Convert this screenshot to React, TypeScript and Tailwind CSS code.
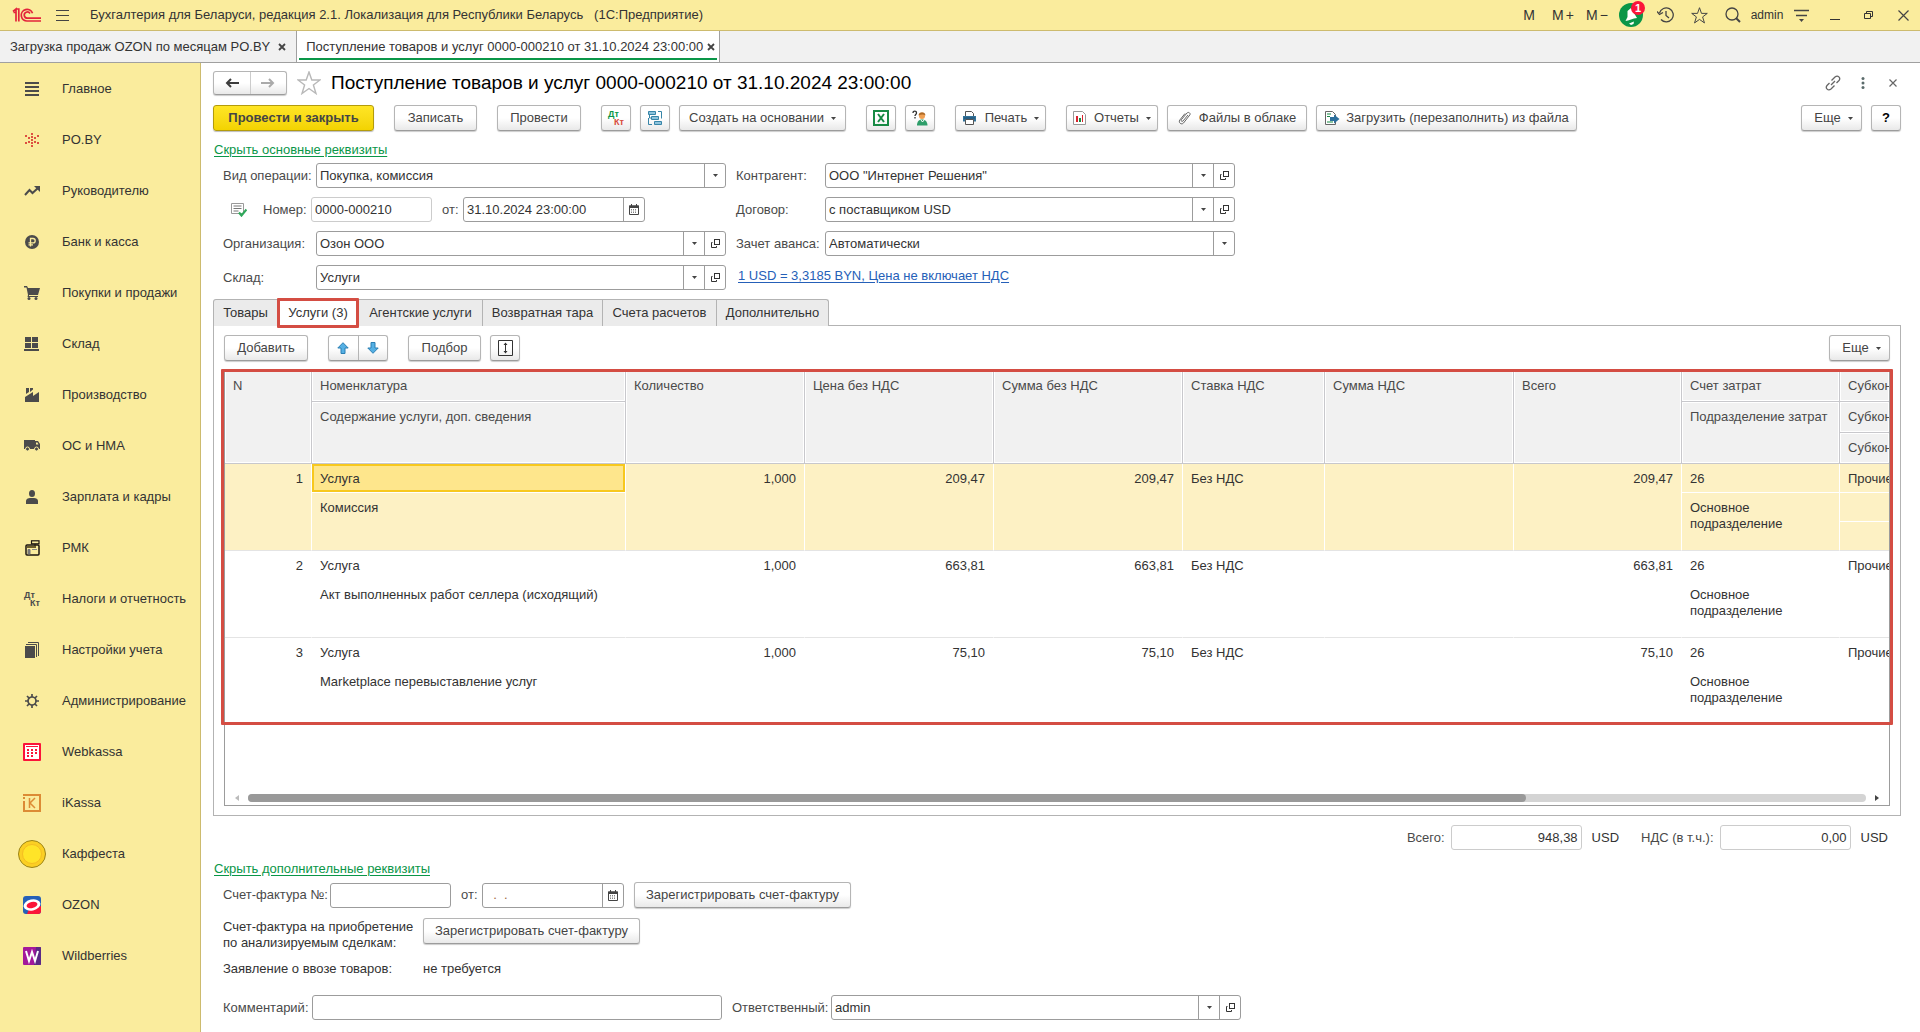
import type { ReactNode } from 'react';
import clsx from 'clsx';

/* ---------- Small icons ---------- */

function Caret({ className = '' }: { className?: string }) {
  return (
    <svg width="5" height="3" viewBox="0 0 5 3" className={className} aria-hidden="true">
      <path d="M0 0h5L2.500 3z" fill="#444" />
    </svg>
  );
}

function OpenIcon() {
  return (
    <svg width="11" height="11" viewBox="0 0 11 11" fill="none" stroke="#333" aria-hidden="true">
      <rect x="4.500" y="1.500" width="5" height="5" />
      <path d="M2.500 4.500H1.500v5h5V8" />
    </svg>
  );
}

function CalendarIcon() {
  return (
    <svg width="10" height="11" viewBox="0 0 10 11" aria-hidden="true">
      <path d="M.5 2h9v8.500h-9z" fill="none" stroke="#444" />
      <path d="M0 1.500h10V4H0zM2 0h1v2H2zM7 0h1v2H7z" fill="#444" />
      <path d="M2 5.500h6M2 7h6M2 8.500h6" stroke="#777" strokeWidth=".9" strokeDasharray="1 1" />
    </svg>
  );
}

function DtKtIcon({ dt = '#0a9648', kt = '#d84a3a' }: { dt?: string; kt?: string }) {
  return (
    <svg width="18" height="18" viewBox="0 0 18 18" aria-hidden="true" fontFamily="Liberation Sans, Arial, sans-serif" fontWeight="700" fontSize="9">
      <text x="1" y="8" fill={dt}>Дт</text>
      <text x="7" y="16" fill={kt}>Кт</text>
    </svg>
  );
}

function StarOutline({ size, color }: { size: number; color: string }) {
  return (
    <svg width={size} height={size} viewBox="0 0 24 24" fill="none" stroke={color} strokeWidth="1.400" aria-hidden="true">
      <path d="M12 1l2.800 8H23l-6.600 5 2.600 8.500-7-5-7 5L7.600 14 1 9h8.200z" />
    </svg>
  );
}

function Logo() {
  return (
    <svg width="30" height="16" viewBox="0 0 30 16" fill="none" stroke="#e3243b" strokeWidth="1.700" aria-label="1C">
      <path d="M1 4.500L4 2v12.500M4 2h2.800v12.500M1.500 5.500H4" />
      <path d="M20.500 6.200A5.800 5.800 0 1 0 15.500 14H29" />
      <path d="M18 6.500A3.100 3.100 0 1 0 15.500 11.200H29" />
    </svg>
  );
}

/* ---------- Title bar ---------- */

function BellIcon() {
  return (
    <span className="relative block h-6 w-6">
      <svg width="24" height="24" viewBox="0 0 24 24" aria-hidden="true">
        <circle cx="12" cy="12" r="12" fill="#0a9648" />
        <path d="M6.500 18l2-4V8l3.500-3 6 10-3 .5-6 2z" fill="#fff" />
        <path d="M10 20.500l5-2-.5 2.500-2.500 1z" fill="#fff" />
      </svg>
      <span className="absolute -top-0.5 -right-0.5 flex h-[14px] w-[14px] items-center justify-center rounded-full bg-[#fb1439] text-[11px] leading-none font-bold text-white">
        1
      </span>
    </span>
  );
}

const titleActions: { label: string; icon: ReactNode }[] = [
  { label: 'Память', icon: 'M' },
  { label: 'Память плюс', icon: <span className="flex gap-[2px]">M<span>+</span></span> },
  { label: 'Память минус', icon: <span className="flex gap-[2px]">M<span>−</span></span> },
  { label: 'Оповещения', icon: <BellIcon /> },
  {
    label: 'История',
    icon: (
      <svg width="17" height="16" viewBox="0 0 17 16" fill="none" stroke="#444" strokeWidth="1.300">
        <path d="M2.500 6A7 7 0 1 1 4 12.500M9 4v4.500l3 2.500" />
        <path d="M0 4.500l2.500 3L6 5.500" />
      </svg>
    ),
  },
  { label: 'Избранное', icon: <StarOutline size={17} color="#444" /> },
  {
    label: 'Поиск',
    icon: (
      <svg width="16" height="16" viewBox="0 0 16 16" fill="none" stroke="#444">
        <circle cx="7" cy="7" r="6" strokeWidth="1.300" />
        <path d="M11 11l4 4" strokeWidth="2" />
      </svg>
    ),
  },
  { label: 'Пользователь', icon: <span className="text-xs">admin</span> },
  {
    label: 'Настройки',
    icon: (
      <svg width="15" height="13" viewBox="0 0 15 13" stroke="#444" strokeWidth="1.300">
        <path d="M0 1.500h15M2 6.500h11" />
        <path d="M5 10h5l-2.500 3z" fill="#444" stroke="none" />
      </svg>
    ),
  },
  {
    label: 'Свернуть',
    icon: (
      <svg width="10" height="10" viewBox="0 0 10 10" stroke="#333">
        <path d="M0 9.500h10" />
      </svg>
    ),
  },
  {
    label: 'Восстановить',
    icon: (
      <svg width="10" height="10" viewBox="0 0 10 10" fill="none" stroke="#333">
        <path d="M.5 3.500h6v5h-6zM2.500 3V1.500h6v5H7" />
      </svg>
    ),
  },
  {
    label: 'Закрыть',
    icon: (
      <svg width="11" height="11" viewBox="0 0 11 11" stroke="#444" strokeWidth="1.200">
        <path d="M.5.5l10 10M10.500.5l-10 10" />
      </svg>
    ),
  },
];

function TitleBar() {
  return (
    <header className="flex h-[31px] items-center border-b border-[#cdbb6e] bg-[#faec9d]">
      <div className="flex w-[90px] items-center gap-[13px] pl-3">
        <Logo />
        <button aria-label="Меню">
          <svg width="15" height="11" viewBox="0 0 15 11" stroke="#444" className="block">
            <path d="M1 .5h13M1 5.500h13M1 10.500h13" />
          </svg>
        </button>
      </div>
      <h1 className="flex-1 text-[13px] whitespace-pre">
        {'Бухгалтерия для Беларуси, редакция 2.1. Локализация для Республики Беларусь   (1С:Предприятие)'}
      </h1>
      <div className="flex">
        {titleActions.map((a) => (
          <button
            key={a.label}
            aria-label={a.label}
            className="flex h-[30px] w-[34px] items-center justify-center text-[14px]"
          >
            {a.icon}
          </button>
        ))}
      </div>
    </header>
  );
}

function WindowTabs() {
  return (
    <nav className="flex h-8 border-b border-[#a0a0a0] bg-[#f1f1f1] text-[13px]">
      <div className="flex items-center gap-2 border-r border-[#a0a0a0] px-[10px]">
        <a href="#ozon" className="whitespace-nowrap">Загрузка продаж OZON по месяцам PO.BY</a>
        <CloseTab />
      </div>
      <div className="flex bg-white px-[2px] pb-[2px]">
        <div className="flex items-center gap-1 pt-[2px] pr-[2px] pl-[7px] shadow-[inset_0_-2px_#0a9648]">
          <a href="#receipt" className="whitespace-nowrap">Поступление товаров и услуг 0000-000210 от 31.10.2024 23:00:00</a>
          <CloseTab />
        </div>
      </div>
      <div className="border-l border-[#a0a0a0]" />
    </nav>
  );
}

function CloseTab() {
  return (
    <button aria-label="Закрыть вкладку">
      <svg width="8" height="8" viewBox="0 0 8 8" stroke="#444" strokeWidth="1.800">
        <path d="M1 1l6 6M7 1L1 7" />
      </svg>
    </button>
  );
}

/* ---------- Sidebar ---------- */

const g = '#4b4b4b';

const sections: { name: string; icon: ReactNode }[] = [
  {
    name: 'Главное',
    icon: (
      <svg width="14" height="14" viewBox="0 0 14 14" stroke={g} strokeWidth="2">
        <path d="M0 1h14M0 5h14M0 9h14M0 13h14" />
      </svg>
    ),
  },
  {
    name: 'PO.BY',
    icon: (
      <svg width="14" height="14" viewBox="0 0 14 14" fill="#dd5040">
        <path d="M6 0h2v2H6zM6 3h2v2H6zM6 6h2v2H6zM6 9h2v2H6zM6 12h2v2H6zM0 2h2v2H0zM12 2h2v2h-2zM3 4h2v2H3zM9 4h2v2H9zM3 8h2v2H3zM9 8h2v2H9zM0 9h2v2H0zM12 9h2v2h-2z" />
      </svg>
    ),
  },
  {
    name: 'Руководителю',
    icon: (
      <svg width="16" height="10" viewBox="0 0 16 10" fill="none" stroke={g} strokeWidth="2">
        <path d="M1 9l4.500-5 3 3L14 2" />
        <path d="M10 0h6v6z" fill={g} stroke="none" />
      </svg>
    ),
  },
  {
    name: 'Банк и касса',
    icon: (
      <svg width="14" height="14" viewBox="0 0 14 14">
        <circle cx="7" cy="7" r="7" fill={g} />
        <path d="M5.500 11.500V3.500H8a2.200 2.200 0 0 1 0 4.400H3.500M3.500 9.800h4.500" fill="none" stroke="#faec9d" strokeWidth="1.300" />
      </svg>
    ),
  },
  {
    name: 'Покупки и продажи',
    icon: (
      <svg width="16" height="14" viewBox="0 0 16 14" fill={g}>
        <path d="M0 0h3l1 2h12l-2 7H5v1h9v1H3.500L4 9 2.500 1.500H0z" />
        <circle cx="5" cy="12.500" r="1.500" />
        <circle cx="12" cy="12.500" r="1.500" />
      </svg>
    ),
  },
  {
    name: 'Склад',
    icon: (
      <svg width="16" height="14" viewBox="0 0 16 14" fill={g}>
        <path d="M1 0h6v5H1zM8 0h6v5H8zM1 6h6v5H1zM8 6h6v5H8zM0 12h15v2H0z" />
      </svg>
    ),
  },
  {
    name: 'Производство',
    icon: (
      <svg width="14" height="14" viewBox="0 0 14 14" fill={g}>
        <path d="M0 9l8-5v4l6-4v10H0zM1 0h3v4L1 6zM5 0h3v1.500L5 4z" />
      </svg>
    ),
  },
  {
    name: 'ОС и НМА',
    icon: (
      <svg width="16" height="11" viewBox="0 0 16 11" fill={g}>
        <path d="M0 0h11v9H0zM10.500 1H14l2 3v5h-5.500z" />
        <path d="M12 2.500h1.500L14.500 4.500H12z" fill="#faec9d" />
        <circle cx="3.500" cy="9" r="2" stroke="#faec9d" />
        <circle cx="12.500" cy="9" r="2" stroke="#faec9d" />
      </svg>
    ),
  },
  {
    name: 'Зарплата и кадры',
    icon: (
      <svg width="12" height="14" viewBox="0 0 12 14" fill={g}>
        <ellipse cx="6" cy="3.500" rx="3" ry="3.500" />
        <path d="M0 14v-3c0-2 2-3 4-3h4c2 0 4 1 4 3v3z" />
      </svg>
    ),
  },
  {
    name: 'РМК',
    icon: (
      <svg width="15" height="16" viewBox="0 0 15 16" fill="none" stroke="#1b1410">
        <rect x="6.500" y=".8" width="7.500" height="3" strokeWidth="1.200" />
        <path d="M10 4v2" />
        <rect x="1" y="5" width="13" height="10" rx="1" strokeWidth="1.500" />
        <path d="M2 7h9" stroke="#6b5d2c" strokeWidth="2" />
        <path d="M3 9.500h2v4.500H3z" fill="#777" stroke="#777" />
        <path d="M7 9.500h5" stroke="#888" />
      </svg>
    ),
  },
  { name: 'Налоги и отчетность', icon: <DtKtIcon dt={g} kt={g} /> },
  {
    name: 'Настройки учета',
    icon: (
      <svg width="14" height="16" viewBox="0 0 14 16" fill={g}>
        <path d="M0 4h10v12H0z" />
        <path d="M1 2.500h10.500V15M3 .5h10.500V14" fill="none" stroke={g} />
      </svg>
    ),
  },
  {
    name: 'Администрирование',
    icon: (
      <svg width="14" height="14" viewBox="0 0 14 14" fill="none" stroke={g}>
        <circle cx="7" cy="7" r="4" strokeWidth="1.700" />
        <path d="M7 0v3M7 11v3M0 7h3M11 7h3M2 2l2 2M10 10l2 2M12 2l-2 2M4 10l-2 2" strokeWidth="1.700" />
      </svg>
    ),
  },
  {
    name: 'Webkassa',
    icon: (
      <svg width="18" height="18" viewBox="0 0 18 18" fill="#fb1439">
        <rect width="18" height="18" rx="1" />
        <path d="M2 2h14v14H2z" fill="#fff" />
        <path d="M3 3h12v1H3zM4 6h2v2H4zM8 6h2v2H8zM12 6h2v2h-2zM4 9h2v2H4zM8 9h2v2H8zM12 9h2v2h-2zM4 12h2v2H4zM8 12h2v2H8z" />
      </svg>
    ),
  },
  {
    name: 'iKassa',
    icon: (
      <svg width="18" height="18" viewBox="0 0 18 18" fill="none" stroke="#dc8b35">
        <path d="M0 1h17v16H1V7M0 4h2" strokeWidth="2" />
        <path d="M6.500 4v10M12 4L7 9l5 5" strokeWidth="1.500" />
      </svg>
    ),
  },
  {
    name: 'Каффеста',
    icon: (
      <svg width="28" height="28" viewBox="0 0 28 28">
        <circle cx="14" cy="14" r="13.500" fill="#fbcf24" stroke="#9a8418" />
        <circle cx="14" cy="14" r="9.500" fill="#ffe428" stroke="#f5bd22" />
      </svg>
    ),
  },
  {
    name: 'OZON',
    icon: (
      <svg width="18" height="18" viewBox="0 0 18 18">
        <rect width="18" height="18" rx="3" fill="#2560b8" />
        <path d="M4 18l2-5 12-3v5a3 3 0 0 1-3 3z" fill="#fb1439" />
        <ellipse cx="9" cy="9" rx="8.500" ry="5.500" fill="#fff" transform="rotate(-12 9 9)" />
        <ellipse cx="9" cy="9" rx="5.500" ry="3" fill="#fb1439" transform="rotate(-12 9 9)" />
      </svg>
    ),
  },
  {
    name: 'Wildberries',
    icon: (
      <svg width="18" height="18" viewBox="0 0 18 18">
        <rect width="18" height="18" rx="1" fill="#a3189b" />
        <path d="M13 0h4a1 1 0 0 1 1 1v16a1 1 0 0 1-1 1h-6z" fill="#5a2a86" />
        <path d="M3 4l3 10 3-9 3 9 3-10" fill="none" stroke="#fff" strokeWidth="2" />
      </svg>
    ),
  },
];

function Sidebar() {
  return (
    <aside className="w-[201px] shrink-0 border-r border-[#cdbb6e] bg-[#faec9d]">
      <ul>
        {sections.map((s) => (
          <li key={s.name}>
            <a href={`#${s.name}`} className="flex h-[51px] items-center text-[13px] whitespace-nowrap">
              <span className="ml-3 flex w-10 justify-center">{s.icon}</span>
              <span className="ml-[10px]">{s.name}</span>
            </a>
          </li>
        ))}
      </ul>
    </aside>
  );
}

/* ---------- Form controls ---------- */

interface BtnProps {
  children?: ReactNode;
  icon?: ReactNode;
  menu?: boolean;
  label?: string;
  className?: string;
}

function Btn({ children, icon, menu, label, className = 'px-[13px]' }: BtnProps) {
  return (
    <button
      aria-label={label}
      className={clsx(
        'flex h-[26px] shrink-0 items-center justify-center rounded-[3px] border border-[#b5b5b5] border-b-[#9c9c9c] bg-linear-to-b from-white from-50% to-[#e9e9e9] text-[13px] whitespace-nowrap text-[#444] shadow-[0_1px_1px_#0003]',
        className,
      )}
    >
      {icon}
      {children}
      {menu && <Caret className="ml-[7px]" />}
    </button>
  );
}

const boxClass = 'flex h-[25px] rounded-[3px] border border-[#9c9c9c] bg-white';

interface SelectFieldProps {
  id: string;
  value: string;
  open?: boolean;
}

function SelectField({ id, value, open }: SelectFieldProps) {
  return (
    <div className={clsx(boxClass, 'w-[410px]')}>
      <div className="relative flex flex-1">
        <select id={id} className="w-full appearance-none pl-[3px] outline-none">
          <option>{value}</option>
        </select>
        <span className="pointer-events-none absolute inset-y-0 right-0 flex w-[21px] items-center justify-center border-l border-[#9c9c9c]">
          <Caret />
        </span>
      </div>
      {open && (
        <button aria-label="Открыть" className="flex w-[21px] items-center justify-center border-l border-[#9c9c9c]">
          <OpenIcon />
        </button>
      )}
    </div>
  );
}

function DateField({ id, value, className }: { id: string; value: string; className: string }) {
  return (
    <div className={clsx(boxClass, className)}>
      <input id={id} defaultValue={value} className="min-w-0 flex-1 pl-[3px] whitespace-pre outline-none" />
      <button aria-label="Выбрать дату" className="flex w-[21px] items-center justify-center border-l border-[#9c9c9c]">
        <CalendarIcon />
      </button>
    </div>
  );
}

function Label({ id, children, className }: { id: string; children: ReactNode; className?: string }) {
  return (
    <label htmlFor={id} className={clsx('shrink-0 whitespace-nowrap text-[#4a4a4a]', className)}>
      {children}
    </label>
  );
}

/* ---------- Document header ---------- */

function DocumentTitle() {
  return (
    <div className="flex items-center">
      <div className="flex h-6 w-[74px] rounded-[3px] border border-[#b5b5b5] border-b-[#9c9c9c] bg-linear-to-b from-white from-50% to-[#e9e9e9] shadow-[0_1px_1px_#0003]">
        <button aria-label="Назад" className="flex flex-1 items-center justify-center border-r border-[#ccc]">
          <svg width="14" height="10" viewBox="0 0 14 10" fill="none" stroke="#3d3d3d" strokeWidth="2">
            <path d="M14 5H2M6 1L2 5l4 4" />
          </svg>
        </button>
        <button aria-label="Вперед" className="flex flex-1 items-center justify-center">
          <svg width="14" height="10" viewBox="0 0 14 10" fill="none" stroke="#aaa" strokeWidth="2">
            <path d="M0 5h12M8 1l4 4-4 4" />
          </svg>
        </button>
      </div>
      <button aria-label="В избранное" className="mx-[10px]">
        <StarOutline size={24} color="#b8b8b8" />
      </button>
      <h2 className="flex-1 text-[19px] leading-6 text-black">Поступление товаров и услуг 0000-000210 от 31.10.2024 23:00:00</h2>
      <div className="flex items-center gap-5 pr-1">
        <button aria-label="Ссылка">
          <svg width="16" height="16" viewBox="0 0 16 16" fill="none" stroke="#666" strokeWidth="1.300">
            <path d="M6.500 5.500l3.500-3.500c3-2.500 6 1 4 3.500L11.500 8M9.500 10.500L6 14c-3 2.500-6-1-4-3.500L4.500 8M6 10l4-4" />
          </svg>
        </button>
        <button aria-label="Дополнительно">
          <svg width="4" height="12" viewBox="0 0 4 12" fill="#5b6b6b">
            <circle cx="2" cy="1.500" r="1.500" />
            <circle cx="2" cy="6" r="1.500" />
            <circle cx="2" cy="10.500" r="1.500" />
          </svg>
        </button>
        <button aria-label="Закрыть документ" className="ml-1">
          <svg width="8" height="8" viewBox="0 0 8 8" stroke="#666" strokeWidth="1.200">
            <path d="M.5.5l7 7M7.500.5l-7 7" />
          </svg>
        </button>
      </div>
    </div>
  );
}

function CommandBar() {
  return (
    <div className="mt-[10px] flex">
      <button className="h-[26px] w-[161px] rounded-[3px] border border-[#b39b0c] bg-linear-to-b from-[#ffe524] to-[#f3d300] text-[13px] font-bold text-[#444] shadow-[0_1px_1px_#0004]">
        Провести и закрыть
      </button>
      <Btn className="ml-5 w-[83px]">Записать</Btn>
      <Btn className="ml-5 w-[84px]">Провести</Btn>
      <Btn className="ml-5 w-[30px]" label="Проводки" icon={<DtKtIcon />} />
      <Btn
        className="ml-[9px] w-[30px]"
        label="Структура подчиненности"
        icon={
          <svg width="16" height="16" viewBox="0 0 16 16" fill="#8ec3dc" stroke="#3785a8">
            <path d="M1.500 1.500h7v3h-7zM4.500 6.500h7v3h-7zM7.500 11.500h7v3h-7z" />
            <path d="M11 1.500h3.500v7M1.500 8v6.500H5M2.500 5v3H4" fill="none" />
          </svg>
        }
      />
      <Btn className="ml-[9px] w-[167px]" menu>Создать на основании</Btn>
      <Btn
        className="ml-5 w-[30px]"
        label="Excel"
        icon={
          <svg width="16" height="16" viewBox="0 0 16 16" fill="none" stroke="#178a44" strokeWidth="2">
            <path d="M1 1h14v14H1z" />
            <path d="M5 4l6 8M11 4l-6 8" />
          </svg>
        }
      />
      <Btn
        className="ml-[9px] w-[30px]"
        label="Помощник"
        icon={
          <svg width="16" height="16" viewBox="0 0 16 16">
            <path d="M1 3c0-2.500 3.500-2.500 3.500 0 0 1.500-1.500 1.500-1.500 3M3 7v1.500" fill="none" stroke="#333" strokeWidth="1.300" />
            <circle cx="10" cy="6" r="3" fill="#f0a052" />
            <path d="M6.500 5.500c0-4.500 7-4.500 7 0C12 4 9 4 6.500 5.500z" fill="#b06a24" />
            <path d="M5 15.500c0-4 2-6 5-6s5.500 2 5.500 6z" fill="#2e9e6a" />
            <path d="M9 10l1.500 2 1.500-2" fill="none" stroke="#fff" />
          </svg>
        }
      />
      <Btn
        className="ml-5 w-[91px]"
        menu
        icon={
          <svg width="15" height="14" viewBox="0 0 15 14" className="mr-2">
            <path d="M3.500 5V.5h6l2 2V5" fill="#fff" stroke="#555" />
            <path d="M1 5h13v5.500H1z" fill="#33739a" />
            <path d="M2 7h11" stroke="#1e4f70" />
            <path d="M3.500 8.500h8v5h-8z" fill="#fff" stroke="#555" />
          </svg>
        }
      >
        Печать
      </Btn>
      <Btn
        className="ml-5 w-[92px]"
        menu
        icon={
          <svg width="13" height="14" viewBox="0 0 13 14" className="mr-2">
            <path d="M.5.5h9l3 3v10H.5z" fill="#fff" stroke="#999" />
            <path d="M3 5h2v6H3z" fill="#d9232e" />
            <path d="M6 7h2v4H6z" fill="#178a44" />
            <path d="M9 4h1v7H9z" fill="#d9232e" />
          </svg>
        }
      >
        Отчеты
      </Btn>
      <Btn
        className="ml-[9px] w-[140px]"
        icon={
          <svg width="13" height="14" viewBox="0 0 13 14" fill="none" stroke="#666" className="mr-2">
            <path d="M10 4L5 10c-1 1-2.500 0-1.500-1.500L9 2c1.500-1.500 4 .3 2.800 2L5.500 12c-2 2.200-5.500-.3-3.700-3L7 2.500" />
          </svg>
        }
      >
        Файлы в облаке
      </Btn>
      <Btn
        className="ml-[9px] w-[261px]"
        icon={
          <svg width="16" height="16" viewBox="0 0 16 16" className="mr-[6px]">
            <path d="M1.500 1.500h7l3 3v10h-10z" fill="#fff" stroke="#666" />
            <path d="M3 4h4M3 6.500h3M3 12h6" stroke="#178a44" />
            <path d="M6 7h4V4.500L15.500 9 10 13.500V11H6z" fill="#2c6f9c" />
          </svg>
        }
      >
        Загрузить (перезаполнить) из файла
      </Btn>
      <div className="flex-1" />
      <Btn className="w-[61px] pl-1" menu>Еще</Btn>
      <Btn className="ml-[9px] w-[30px] font-bold text-black">?</Btn>
    </div>
  );
}

function MainDetails() {
  return (
    <div className="mt-[3px] grid grid-cols-[93px_410px_99px_410px] gap-y-[9px] pl-[10px] text-[13px]">
      <Label id="operation" className="self-center">Вид операции:</Label>
      <SelectField id="operation" value="Покупка, комиссия" />
      <Label id="contractor" className="self-center pl-[10px]">Контрагент:</Label>
      <SelectField id="contractor" value={'ООО "Интернет Решения"'} open />

      <div className="col-span-2 flex items-center">
        <svg width="16" height="15" viewBox="0 0 16 15" className="ml-2">
          <path d="M.5 1.500h12v10H.5z" fill="#fff" stroke="#999" />
          <path d="M2.500 4h8M2.500 6.500h8M2.500 9h5" stroke="#777" />
          <path d="M8 10.500l2.500 3 5-6" fill="none" stroke="#2fa85a" strokeWidth="2.200" />
        </svg>
        <Label id="number" className="ml-4 w-12">Номер:</Label>
        <input id="number" defaultValue="0000-000210" readOnly className="h-[25px] w-[121px] rounded-[3px] border border-[#ccc] pl-[3px] outline-none" />
        <Label id="date" className="ml-[10px] w-[21px]">от:</Label>
        <DateField id="date" value="31.10.2024 23:00:00" className="w-[182px]" />
      </div>
      <Label id="contract" className="self-center pl-[10px]">Договор:</Label>
      <SelectField id="contract" value="с поставщиком USD" open />

      <Label id="organization" className="self-center">Организация:</Label>
      <SelectField id="organization" value="Озон ООО" open />
      <Label id="advance" className="self-center pl-[10px]">Зачет аванса:</Label>
      <SelectField id="advance" value="Автоматически" />

      <Label id="warehouse" className="self-center">Склад:</Label>
      <SelectField id="warehouse" value="Услуги" open />
      <a href="#prices" className="col-span-2 ml-3 self-start pt-px text-[#2560b8] underline underline-offset-2">
        1 USD = 3,3185 BYN, Цена не включает НДС
      </a>
    </div>
  );
}

/* ---------- Services table ---------- */

const tabs = [
  { name: 'Товары', width: 'w-[65px]' },
  { name: 'Услуги (3)', width: 'w-[81px]', active: true },
  { name: 'Агентские услуги', width: 'w-[124px]' },
  { name: 'Возвратная тара', width: 'w-[120px]' },
  { name: 'Счета расчетов', width: 'w-[114px]' },
  { name: 'Дополнительно', width: 'w-[112px]' },
];

function DocumentTabs() {
  return (
    <div role="tablist" className="mt-[9px] flex text-[13px]">
      {tabs.map((tab) => (
        <button
          key={tab.name}
          role="tab"
          aria-selected={!!tab.active}
          className={clsx(
            'relative h-[27px] border-t border-r border-[#b3b3b3] whitespace-nowrap first:rounded-tl-[3px] first:border-l last:rounded-tr-[3px]',
            tab.width,
            tab.active ? 'bg-white' : 'bg-[#ebebeb]',
          )}
        >
          {tab.name}
          {tab.active && <span className="absolute -inset-x-px -top-[2px] -bottom-[2px] z-10 rounded-[1px] border-[3px] border-[#d44d43]" />}
        </button>
      ))}
    </div>
  );
}

const services = [
  { n: 1, name: 'Услуга', details: 'Комиссия', qty: '1,000', price: '209,47', sum: '209,47', total: '209,47' },
  { n: 2, name: 'Услуга', details: 'Акт выполненных работ селлера (исходящий)', qty: '1,000', price: '663,81', sum: '663,81', total: '663,81' },
  { n: 3, name: 'Услуга', details: 'Marketplace перевыставление услуг', qty: '1,000', price: '75,10', sum: '75,10', total: '75,10' },
];

const th = 'border-r border-b border-[#c8c8cc] px-2 pt-[7px] text-left align-top font-normal text-[#4a4a4a] shadow-[inset_0_0_0_1px_#fff] overflow-hidden whitespace-nowrap';

function ServicesTable() {
  return (
    <table className="w-full table-fixed border-separate border-spacing-0 text-[13px] leading-4">
      <colgroup>
        <col className="w-[87px]" />
        <col />
        <col className="w-[179px]" />
        <col className="w-[189px]" />
        <col className="w-[189px]" />
        <col className="w-[142px]" />
        <col className="w-[189px]" />
        <col className="w-[168px]" />
        <col className="w-[158px]" />
        <col className="w-[49px]" />
      </colgroup>
      <thead className="bg-[#f1f1f1]">
        <tr className="h-[31px]">
          <th rowSpan={3} className={th}>N</th>
          <th className={th}>Номенклатура</th>
          <th rowSpan={3} className={th}>Количество</th>
          <th rowSpan={3} className={th}>Цена без НДС</th>
          <th rowSpan={3} className={th}>Сумма без НДС</th>
          <th rowSpan={3} className={th}>Ставка НДС</th>
          <th rowSpan={3} className={th}>Сумма НДС</th>
          <th rowSpan={3} className={th}>Всего</th>
          <th className={th}>Счет затрат</th>
          <th className={clsx(th, 'border-r-0 pr-0')}>Субконто</th>
        </tr>
        <tr className="h-[31px]">
          <th rowSpan={2} className={th}>Содержание услуги, доп. сведения</th>
          <th rowSpan={2} className={th}>Подразделение затрат</th>
          <th className={clsx(th, 'border-r-0 pr-0')}>Субконто</th>
        </tr>
        <tr className="h-[31px]">
          <th className={clsx(th, 'border-r-0 pr-0')}>Субконто</th>
        </tr>
      </thead>
      {services.map((s) => {
        const selected = s.n === 1;
        const cell = clsx('overflow-hidden border-r px-2 align-top pt-[7px]', selected ? 'border-white' : 'border-transparent');
        const end = 'border-b border-b-[#e4e4e4]';
        const inner = clsx('border-b', selected ? 'border-b-white' : 'border-b-transparent');
        return (
          <tbody key={s.n} className={selected ? 'bg-[#fdf1c4]' : 'bg-white'}>
            <tr className="h-[29px]">
              <td rowSpan={3} className={clsx(cell, end, 'text-right')}>{s.n}</td>
              <td className={clsx(cell, inner, selected && 'bg-[#fee68c] shadow-[inset_0_0_0_2px_#f7c81e]')}>{s.name}</td>
              <td rowSpan={3} className={clsx(cell, end, 'text-right')}>{s.qty}</td>
              <td rowSpan={3} className={clsx(cell, end, 'text-right')}>{s.price}</td>
              <td rowSpan={3} className={clsx(cell, end, 'text-right')}>{s.sum}</td>
              <td rowSpan={3} className={clsx(cell, end)}>Без НДС</td>
              <td rowSpan={3} className={clsx(cell, end)} />
              <td rowSpan={3} className={clsx(cell, end, 'text-right')}>{s.total}</td>
              <td className={clsx(cell, inner)}>26</td>
              <td className={clsx(cell, inner, 'border-r-0 pr-0 whitespace-nowrap')}>Прочие</td>
            </tr>
            <tr className="h-[29px]">
              <td rowSpan={2} className={clsx(cell, end)}>{s.details}</td>
              <td rowSpan={2} className={clsx(cell, end)}>Основное подразделение</td>
              <td className={clsx(cell, inner, 'border-r-0')} />
            </tr>
            <tr className="h-[29px]">
              <td className={clsx(cell, end, 'border-r-0')} />
            </tr>
          </tbody>
        );
      })}
    </table>
  );
}

function ServicesPanel() {
  return (
    <section className="-mt-px flex flex-1 flex-col border border-[#b3b3b3] px-[10px] py-[9px]">
      <div className="flex">
        <Btn className="w-[84px]">Добавить</Btn>
        <div className="ml-5 flex h-[26px] w-[60px] rounded-[3px] border border-[#b5b5b5] border-b-[#9c9c9c] bg-linear-to-b from-white from-50% to-[#e9e9e9] shadow-[0_1px_1px_#0003]">
          <button aria-label="Вверх" className="flex flex-1 items-center justify-center border-r border-[#b5b5b5]">
            <svg width="12" height="12" viewBox="0 0 12 12" fill="#55b0e4" stroke="#2b7fb3">
              <path d="M6 .7l5.200 5.300H8v5.500H4V6H.8z" />
            </svg>
          </button>
          <button aria-label="Вниз" className="flex flex-1 items-center justify-center">
            <svg width="12" height="12" viewBox="0 0 12 12" fill="#55b0e4" stroke="#2b7fb3">
              <path d="M6 11.300L.8 6H4V.5h4V6h3.200z" />
            </svg>
          </button>
        </div>
        <Btn className="ml-5 w-[73px]">Подбор</Btn>
        <Btn
          className="ml-[9px] w-[30px]"
          label="Высота строк"
          icon={
            <svg width="15" height="16" viewBox="0 0 15 16" fill="none" stroke="#333">
              <path d="M.5.5h14v15H.5zM7.500 3v10" />
              <path d="M5.500 5L7.500 2.500 9.500 5zM5.500 11l2 2.500 2-2.500z" fill="#333" stroke="none" />
            </svg>
          }
        />
        <div className="flex-1" />
        <Btn className="w-[61px] pl-1" menu>Еще</Btn>
      </div>

      <div className="mt-[9px] flex flex-1 flex-col border border-[#9c9c9c]">
        <div className="relative">
          <ServicesTable />
          <div className="pointer-events-none absolute -inset-x-1 -top-[2px] bottom-0 rounded-[1px] border-[3px] border-[#d44d43]" />
        </div>
        <div className="mt-auto flex h-[14px] items-center px-[10px]">
          <svg width="4" height="6" viewBox="0 0 4 6" fill="#bbb"><path d="M4 0v6L0 3z" /></svg>
          <div className="mx-[9px] h-2 flex-1 rounded-full bg-[#d4d4d4]">
            <div className="h-2 w-[79%] rounded-full bg-[#999]" />
          </div>
          <svg width="4" height="6" viewBox="0 0 4 6" fill="#444"><path d="M0 0v6l4-3z" /></svg>
        </div>
      </div>
    </section>
  );
}

/* ---------- Footer ---------- */

function Totals() {
  const total = 'mr-[10px] h-[25px] w-[131px] rounded-[3px] border border-[#ccc] pr-[3px] text-right outline-none';
  return (
    <div className="mt-[9px] flex items-center justify-end pr-[13px] text-[13px]">
      <Label id="total" className="mr-[6px]">Всего:</Label>
      <input id="total" defaultValue="948,38" readOnly className={total} />
      <span>USD</span>
      <Label id="vat" className="mr-[6px] ml-[22px]">НДС (в т.ч.):</Label>
      <input id="vat" defaultValue="0,00" readOnly className={total} />
      <span>USD</span>
    </div>
  );
}

function ExtraDetails() {
  return (
    <div className="pl-[10px] text-[13px]">
      <div className="mt-[3px] flex items-center">
        <Label id="invoice" className="w-[107px]">Счет-фактура №:</Label>
        <input id="invoice" className="h-[25px] w-[121px] rounded-[3px] border border-[#9c9c9c] pl-[3px] outline-none" />
        <Label id="invoiceDate" className="ml-[10px] w-[21px]">от:</Label>
        <DateField id="invoiceDate" value="  .  ." className="w-[142px] text-[#a06a3c]" />
        <Btn className="ml-[10px] w-[217px]">Зарегистрировать счет-фактуру</Btn>
      </div>
      <div className="mt-[10px] flex">
        <p className="w-[200px] pt-px leading-4">
          Счет-фактура на приобретение
          <br />
          по анализируемым сделкам:
        </p>
        <Btn className="w-[217px]">Зарегистрировать счет-фактуру</Btn>
      </div>
      <div className="mt-1 flex h-7 items-center">
        <span className="w-[200px]">Заявление о ввозе товаров:</span>
        <span>не требуется</span>
      </div>
      <div className="mt-3 flex items-center">
        <Label id="comment" className="w-[89px]">Комментарий:</Label>
        <input id="comment" className="h-[25px] w-[410px] rounded-[3px] border border-[#9c9c9c] pl-[3px] outline-none" />
        <Label id="responsible" className="ml-[10px] w-[99px]">Ответственный:</Label>
        <SelectField id="responsible" value="admin" open />
      </div>
    </div>
  );
}

const toggleLink = 'self-start pl-px text-[13px] leading-5 text-[#0a9648] underline underline-offset-2';

export default function App() {
  return (
    <div className="flex min-h-screen flex-col bg-white font-['Liberation_Sans',Arial,sans-serif] text-[#333]">
      <TitleBar />
      <WindowTabs />
      <div className="flex flex-1">
        <Sidebar />
        <main className="flex min-w-0 flex-1 flex-col pt-2 pr-[19px] pb-3 pl-3">
          <DocumentTitle />
          <CommandBar />
          <a href="#main-details" className={clsx(toggleLink, 'mt-[9px]')}>Скрыть основные реквизиты</a>
          <MainDetails />
          <DocumentTabs />
          <ServicesPanel />
          <Totals />
          <a href="#extra-details" className={clsx(toggleLink, 'mt-[9px]')}>Скрыть дополнительные реквизиты</a>
          <ExtraDetails />
        </main>
      </div>
    </div>
  );
}
